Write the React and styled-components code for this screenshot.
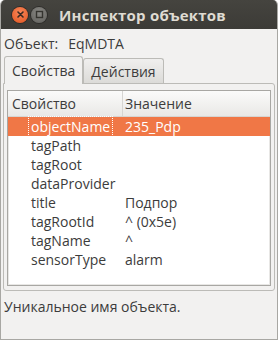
import React from 'react';
import styled, { createGlobalStyle } from 'styled-components';

const GlobalStyle = createGlobalStyle`
  html, body {
    margin: 0;
    padding: 0;
    background: #ffffff;
  }
  * {
    box-sizing: border-box;
  }
`;

const Window = styled.div`
  width: 278px;
  height: 340px;
  display: flex;
  flex-direction: column;
  background: #f2f1f0;
  border: 1px solid #a8a7a3;
  border-top: none;
  border-radius: 5px 5px 0 0;
  overflow: hidden;
  font-family: 'Open Sans', 'DejaVu Sans', sans-serif;
  font-size: 14px;
  color: #3c3c3c;
`;

const TitleBar = styled.div`
  height: 29px;
  flex: none;
  display: flex;
  align-items: center;
  padding-left: 11px;
  background: linear-gradient(#45443f, #3c3b37);
  color: #dfdbd2;
`;

const WinButton = styled.div`
  width: 16px;
  height: 16px;
  border-radius: 50%;
  margin-right: 3px;
  display: flex;
  align-items: center;
  justify-content: center;
  background: ${({ close }) =>
    close
      ? 'radial-gradient(circle at 50% 35%, #f8875a, #e2541f)'
      : 'radial-gradient(circle at 50% 35%, #8a8985, #5f5e5a)'};
  box-shadow: 0 0 0 1px #2e2d2a;
`;

const Title = styled.div`
  margin-left: 9px;
  font-weight: bold;
  font-size: 15px;
  letter-spacing: 0.2px;
`;

const Body = styled.div`
  flex: 1;
  display: flex;
  flex-direction: column;
  padding: 2px 2px 0 2px;
`;

const ObjectRow = styled.div`
  height: 24px;
  display: flex;
  align-items: center;
  gap: 10px;
  padding-left: 1px;
`;

const Tabs = styled.div`
  display: flex;
  align-items: flex-end;
  height: 28px;
  padding-left: 1px;
`;

const Tab = styled.div`
  height: ${({ active }) => (active ? '28px' : '25px')};
  padding: 0 7px;
  display: flex;
  align-items: center;
  border: 1px solid #bcbbb7;
  border-bottom: none;
  border-radius: 3px 3px 0 0;
  background: ${({ active }) =>
    active ? '#f2f1f0' : 'linear-gradient(#f0efee, #dcdbd8)'};
  margin-bottom: ${({ active }) => (active ? '-1px' : '0')};
  position: relative;
  z-index: ${({ active }) => (active ? 1 : 0)};
  color: #3c3c3c;
`;

const Pane = styled.div`
  height: 208px;
  border: 1px solid #bcbbb7;
  border-radius: 0 3px 3px 3px;
  padding: 6px 3px 4px 3px;
  display: flex;
`;

const Tree = styled.div`
  flex: 1;
  background: #ffffff;
  border: 1px solid #a8a7a3;
  box-shadow: inset 0 0 0 1px #e8e7e5;
  display: flex;
  flex-direction: column;
`;

const Row = styled.div`
  display: grid;
  grid-template-columns: 115px 1fr;
  height: ${({ header }) => (header ? '26px' : '19px')};
  align-items: center;
  background: ${({ header, selected }) =>
    header
      ? 'linear-gradient(#fbfbfa, #e9e8e6)'
      : selected
      ? '#f07746'
      : 'transparent'};
  color: ${({ selected }) => (selected ? '#ffffff' : '#3c3c3c')};
  border-bottom: ${({ header }) => (header ? '1px solid #d6d5d2' : 'none')};
`;

const HeadCell = styled.div`
  height: 100%;
  display: flex;
  align-items: center;
  padding-left: 4px;
  border-right: 1px solid #d6d5d2;
`;

const Cell = styled.div`
  height: 100%;
  display: flex;
  align-items: center;
  padding-left: ${({ indent }) => (indent ? '24px' : '2px')};
`;

const Focus = styled.span`
  outline: ${({ focus }) => (focus ? '1px dotted #ffffff' : 'none')};
  outline-offset: 0;
  padding: 0 2px 0 2px;
  margin-left: -3px;
  height: 100%;
  display: flex;
  align-items: center;
`;

const Status = styled.div`
  height: 30px;
  display: flex;
  align-items: center;
  padding-left: 1px;
`;

const props = [
  ['objectName', '235_Pdp'],
  ['tagPath', ''],
  ['tagRoot', ''],
  ['dataProvider', ''],
  ['title', 'Подпор'],
  ['tagRootId', '^ (0x5e)'],
  ['tagName', '^'],
  ['sensorType', 'alarm'],
];

export default function App() {
  return (
    <>
      <GlobalStyle />
      <Window>
        <TitleBar>
          <WinButton close>
            <svg width="9" height="9" viewBox="0 0 9 9">
              <path d="M2 2 L7 7 M7 2 L2 7" stroke="#3a2a22" strokeWidth="1.6" strokeLinecap="round" />
            </svg>
          </WinButton>
          <WinButton>
            <svg width="9" height="9" viewBox="0 0 9 9">
              <rect x="1.5" y="1.5" width="6" height="6" fill="none" stroke="#35342f" strokeWidth="1.4" />
            </svg>
          </WinButton>
          <Title>Инспектор объектов</Title>
        </TitleBar>
        <Body>
          <ObjectRow>
            <span>Объект:</span>
            <span>EqMDTA</span>
          </ObjectRow>
          <Tabs>
            <Tab active>Свойства</Tab>
            <Tab>Действия</Tab>
          </Tabs>
          <Pane>
            <Tree>
              <Row header>
                <HeadCell>Свойство</HeadCell>
                <Cell>Значение</Cell>
              </Row>
              {props.map(([name, value], i) => (
                <Row key={name} selected={i === 0}>
                  <Cell indent>
                    <Focus focus={i === 0}>{name}</Focus>
                  </Cell>
                  <Cell>{value}</Cell>
                </Row>
              ))}
            </Tree>
          </Pane>
          <Status>Уникальное имя объекта.</Status>
        </Body>
      </Window>
    </>
  );
}
